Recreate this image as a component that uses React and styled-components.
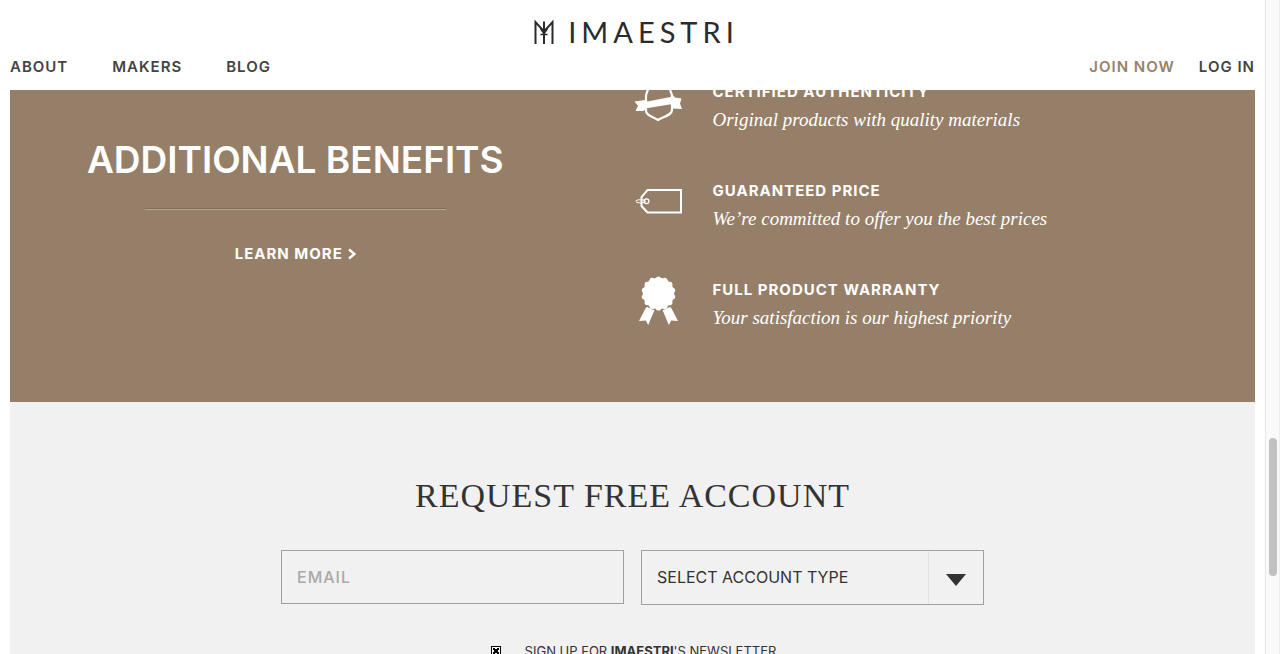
import React from "react";
import styled, { createGlobalStyle } from "styled-components";

const sans = `Inter, "Liberation Sans", sans-serif`;
const serif = `"Liberation Serif", "Times New Roman", serif`;
const brown = "#967f68";
const ink = "#333333";

const GlobalStyle = createGlobalStyle`
  *, *::before, *::after { box-sizing: border-box; }
  body { margin: 0; background: #fff; color: ${ink}; font-family: ${sans}; }
  h1, h2, h3, p, ul { margin: 0; padding: 0; }
  a { color: inherit; text-decoration: none; }
`;

const Window = styled.div`
  display: flex;
  height: 100vh;
  overflow: hidden;
`;

const Page = styled.div`
  flex: 1;
  min-width: 0;
  padding: 0 10px;
  overflow: hidden;
`;

const ScrollTrack = styled.div`
  display: flex;
  flex-direction: column;
  align-items: center;
  width: 15px;
  background: #fafafa;
  border-left: 1px solid #e7e7e7;
  border-right: 1px solid #ededed;
`;

const TrackSpace = styled.div`
  flex: ${(p) => p.$share};
`;

const ScrollThumb = styled.div`
  flex: 138;
  width: 8px;
  border-radius: 4px;
  background: #c1c1c1;
`;

const Header = styled.header`
  position: relative;
  z-index: 1;
  display: flex;
  flex-direction: column;
  gap: 1px;
  height: 90px;
  padding-top: 15px;
  background: #fff;
`;

const Logo = styled.a`
  display: flex;
  align-items: center;
  align-self: center;
  gap: 14px;
  height: 34px;
  padding-left: 8px;
  font-family: Lato, ${sans};
  font-size: 29px;
  line-height: 34px;
  letter-spacing: 5px;
  color: #2b2b2b;
`;

const NavBar = styled.nav`
  display: flex;
  justify-content: space-between;
  font-size: 15px;
  font-weight: 600;
  line-height: 34px;
  letter-spacing: 1px;
  color: #444;
`;

const NavGroup = styled.div`
  display: flex;
  gap: ${(p) => p.$gap}px;
`;

const NavLink = styled.a`
  color: ${(p) => (p.$accent ? "#98826a" : "inherit")};
`;

const Main = styled.main`
  margin-top: -90px;
`;

const Benefits = styled.section`
  display: grid;
  grid-template-columns: 1fr 1fr;
  padding: 78px 0 70px;
  background: ${brown};
  color: #fff;
`;

const Pitch = styled.div`
  display: flex;
  flex-direction: column;
  align-items: center;
  padding: 58px 52px 0 0;
`;

const PitchTitle = styled.h1`
  font-size: 37px;
  font-weight: 600;
  line-height: 48px;
  white-space: nowrap;
`;

const Divider = styled.hr`
  width: 301px;
  height: 2px;
  margin: 24px 0 30px;
  border: 0;
  border-top: 1px solid #806c58;
  border-bottom: 1px solid #b6a595;
`;

const MoreLink = styled.a`
  display: flex;
  align-items: center;
  gap: 5px;
  font-size: 15px;
  font-weight: 700;
  line-height: 28px;
  letter-spacing: 1px;
`;

const BenefitList = styled.ul`
  display: flex;
  flex-direction: column;
  gap: 43px;
  padding-left: 1px;
  list-style: none;
`;

const Benefit = styled.li`
  display: flex;
  gap: 31px;
`;

const BenefitTitle = styled.h3`
  font-size: 15px;
  font-weight: 700;
  line-height: 28px;
  letter-spacing: 1px;
`;

const BenefitNote = styled.p`
  font-family: ${serif};
  font-size: 19px;
  font-style: italic;
  line-height: 28px;
`;

const Request = styled.section`
  display: flex;
  flex-direction: column;
  align-items: center;
  min-height: 400px;
  padding-top: 70px;
  background: #f1f1f1;
`;

const RequestTitle = styled.h2`
  font-family: ${serif};
  font-size: 34px;
  font-weight: 400;
  line-height: 48px;
  letter-spacing: 1px;
`;

const Form = styled.form`
  display: flex;
  flex-direction: column;
  align-items: center;
  gap: 36px;
  width: 100%;
  max-width: 703px;
  margin-top: 30px;
`;

const Fields = styled.div`
  display: grid;
  grid-template-columns: 1fr 1fr;
  align-items: start;
  gap: 17px;
  width: 100%;
`;

const EmailInput = styled.input`
  width: 100%;
  height: 54px;
  padding: 0 15px;
  border: 1px solid #a0a0a0;
  border-radius: 0;
  background: transparent;
  font-family: ${sans};
  font-size: 16px;
  font-weight: 500;
  letter-spacing: 1px;
  color: ${ink};
  &::placeholder { color: #a9a9a9; opacity: 1; }
`;

const SelectBox = styled.div`
  display: grid;
  grid-template-columns: 1fr 55px;
  height: 55px;
  border: 1px solid #a0a0a0;
`;

const Select = styled.select`
  grid-area: 1 / 1 / 2 / 3;
  width: 100%;
  padding: 0 15px 2px;
  border: 0;
  appearance: none;
  background: transparent;
  font-family: ${sans};
  font-size: 16px;
  color: ${ink};
`;

const SelectArrow = styled.span`
  grid-area: 1 / 2;
  display: flex;
  align-items: center;
  justify-content: center;
  padding-top: 4px;
  border-left: 1px solid #e2e2e2;
  pointer-events: none;
`;

const Newsletter = styled.label`
  display: flex;
  align-items: center;
  gap: 24px;
  padding-left: 2px;
  font-size: 13px;
  line-height: 20px;
`;

const Tick = styled.input`
  width: 10px;
  height: 10px;
  margin: 0;
  appearance: none;
  border: 1px solid #000;
  background: #fff;
  &:checked {
    background:
      linear-gradient(45deg, transparent 35%, #000 35%, #000 65%, transparent 65%) center / 6px 6px no-repeat,
      linear-gradient(-45deg, transparent 35%, #000 35%, #000 65%, transparent 65%) center / 6px 6px no-repeat,
      #fff;
  }
`;

const LogoMark = () => (
  <svg width="20" height="26" viewBox="0 0 20 26" fill="none" stroke="#2b2b2b" aria-hidden="true">
    <path d="M1.500 25V3L10 12.500L18.500 3V25M10 2.500V25" strokeWidth="2" />
    <path d="M6.500 15.500H13.500M6.500 9.500L10 14.500L13.500 9.500" strokeWidth="1.600" />
  </svg>
);

const ShieldIcon = () => (
  <svg width="48" height="50" viewBox="0 0 48 50" fill="none" aria-hidden="true">
    <path
      d="M24 4C20 8 17 9 14 9.500C14.500 13 12 15 12 18V33C12 37 18 38.500 24 42C30 38.500 38 37 38 32V18C38 15 35.500 13 36 9.500C32 9 28 8 24 4Z"
      stroke="#fff"
      strokeWidth="2.200"
    />
    <path
      d="M.5 23.500L11 22V24L39 18.500V17L41 19.500L47.500 20.500L46 25.500L48 31L39 30.500L38.500 26L11 30.500V31.500L9.500 33L1.500 33L4 28Z"
      fill="#fff"
    />
  </svg>
);

const TagIcon = () => (
  <svg width="48" height="50" viewBox="0 0 48 50" fill="none" stroke="#fff" aria-hidden="true">
    <path d="M13.500 13H47V35.500H13.500L7.500 29V20Z" strokeWidth="2" />
    <circle cx="12.500" cy="24.300" r="2.400" strokeWidth="1.300" />
    <ellipse cx="6.700" cy="24.300" rx="5" ry="1.600" strokeWidth="1" />
  </svg>
);

const scallops = Array.from({ length: 14 }, (_, i) => {
  const angle = (i * Math.PI * 2) / 14 + Math.PI / 14;
  return [24.500 + 14.500 * Math.cos(angle), 17.500 + 14.500 * Math.sin(angle)];
});

const RosetteIcon = () => (
  <svg width="48" height="50" viewBox="0 0 48 50" fill="#fff" aria-hidden="true">
    <circle cx="24.500" cy="17.500" r="15.700" />
    {scallops.map(([cx, cy], i) => (
      <circle key={i} cx={cx} cy={cy} r="2.600" />
    ))}
    <path d="M12 31.500C15 30.500 16 34 20.500 34L14.200 49L11.800 44.500L5 45Z" />
    <path d="M37 31.500C34 30.500 33 34 28.500 34L34.800 49L37.200 44.500L44 45Z" />
  </svg>
);

const benefits = [
  { Icon: ShieldIcon, title: "CERTIFIED AUTHENTICITY", note: "Original products with quality materials" },
  { Icon: TagIcon, title: "GUARANTEED PRICE", note: "We’re committed to offer you the best prices" },
  { Icon: RosetteIcon, title: "FULL PRODUCT WARRANTY", note: "Your satisfaction is our highest priority" },
];

export default function App() {
  return (
    <Window>
      <GlobalStyle />
      <Page>
        <Header>
          <Logo href="#">
            <LogoMark />
            IMAESTRI
          </Logo>
          <NavBar>
            <NavGroup $gap={44}>
              <NavLink href="#about">ABOUT</NavLink>
              <NavLink href="#makers">MAKERS</NavLink>
              <NavLink href="#blog">BLOG</NavLink>
            </NavGroup>
            <NavGroup $gap={24}>
              <NavLink href="#join" $accent>JOIN NOW</NavLink>
              <NavLink href="#login">LOG IN</NavLink>
            </NavGroup>
          </NavBar>
        </Header>
        <Main>
          <Benefits>
            <Pitch>
              <PitchTitle>ADDITIONAL BENEFITS</PitchTitle>
              <Divider />
              <MoreLink href="#benefits">
                LEARN MORE
                <svg width="8" height="12" viewBox="0 0 8 12" fill="none" stroke="#fff" strokeWidth="2.400" aria-hidden="true">
                  <path d="M1 1.500L6.500 6L1 10.500" />
                </svg>
              </MoreLink>
            </Pitch>
            <BenefitList>
              {benefits.map(({ Icon, title, note }) => (
                <Benefit key={title}>
                  <Icon />
                  <div>
                    <BenefitTitle>{title}</BenefitTitle>
                    <BenefitNote>{note}</BenefitNote>
                  </div>
                </Benefit>
              ))}
            </BenefitList>
          </Benefits>
          <Request>
            <RequestTitle>REQUEST FREE ACCOUNT</RequestTitle>
            <Form>
              <Fields>
                <EmailInput type="email" placeholder="EMAIL" aria-label="Email" />
                <SelectBox>
                  <Select aria-label="Account type" defaultValue="">
                    <option value="">SELECT ACCOUNT TYPE</option>
                  </Select>
                  <SelectArrow>
                    <svg width="20" height="12" viewBox="0 0 20 12" aria-hidden="true">
                      <path d="M0 0H20L10 12Z" fill={ink} />
                    </svg>
                  </SelectArrow>
                </SelectBox>
              </Fields>
              <Newsletter>
                <Tick type="checkbox" defaultChecked />
                <span>
                  SIGN UP FOR <b>IMAESTRI</b>'S NEWSLETTER
                </span>
              </Newsletter>
            </Form>
          </Request>
        </Main>
      </Page>
      <ScrollTrack>
        <TrackSpace $share={438} />
        <ScrollThumb />
        <TrackSpace $share={78} />
      </ScrollTrack>
    </Window>
  );
}
